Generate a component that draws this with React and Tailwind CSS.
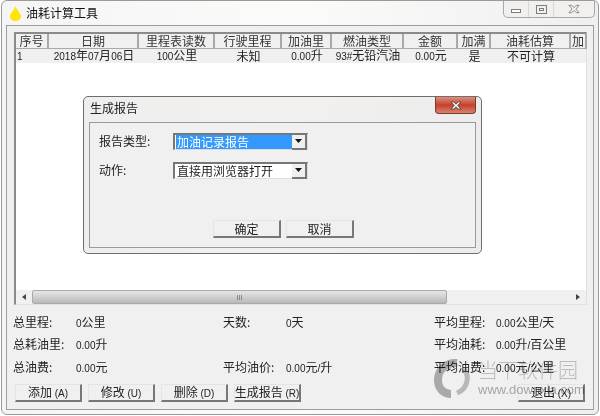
import React from "react";

const CJK = '"Noto Sans CJK SC","Liberation Sans",sans-serif';

function T({ s }) {
  const parts = s.split(/([0-9.#A-Za-z()\/]+)/);
  return (
    <span className="whitespace-pre">
      {parts.map((p, i) =>
        /^[0-9.#A-Za-z()\/]+$/.test(p) ? (
          <span key={i} className="font-['Liberation_Sans'] text-[10px]">{p}</span>
        ) : (
          <span key={i}>{p}</span>
        )
      )}
    </span>
  );
}

const cols = [
  ["序号", "1", "w-[33px]", "pl-[1px] justify-start"],
  ["日期", "2018年07月06日", "w-[90px]", ""],
  ["里程表读数", "100公里", "w-[76px]", ""],
  ["行驶里程", "未知", "w-[67px]", ""],
  ["加油里", "0.00升", "w-[50px]", ""],
  ["燃油类型", "93#无铅汽油", "w-[72px]", ""],
  ["金额", "0.00元", "w-[54px]", ""],
  ["加满", "是", "w-[33px]", ""],
  ["油耗估算", "不可计算", "w-[80px]", ""],
  ["加", "", "w-[16px]", ""],
];

function Btn({ children, w = "w-[67px]" }) {
  return (
    <div className={`${w} h-[18px] flex items-center justify-center whitespace-pre bg-[#f0f0f0] border-t border-l border-t-[#e4e4e4] border-l-[#e4e4e4] border-r-2 border-b-2 border-r-[#777] border-b-[#777] text-[12px] leading-[14px] text-[#222]`}>
      {children}
    </div>
  );
}

function Stat({ label, value, vw, lw }) {
  return (
    <div className={`flex items-center ${vw}`}>
      <span className={`${lw} shrink-0 whitespace-nowrap`}>{label}</span>
      <span className="whitespace-nowrap"><T s={value} /></span>
    </div>
  );
}

function Combo({ text, selected }) {
  return (
    <div className="w-[135px] h-[17px] flex items-center bg-white border-t-2 border-l-2 border-t-[#777] border-l-[#777] border-r border-b border-r-[#ddd] border-b-[#ddd]">
      <div className={`flex-1 h-[14px] ml-[1px] pl-[1px] flex items-center text-[12px] leading-[14px] ${selected ? "bg-[#3399ff] text-white" : "text-[#222]"}`}>{text}</div>
      <div className="w-[15px] h-[15px] flex items-center justify-center bg-[#f0f0f0] border-r-2 border-b-2 border-r-[#777] border-b-[#777]">
        <svg width="7" height="4" viewBox="0 0 7 4"><path d="M0 0h7L3.500 4z" fill="#111" /></svg>
      </div>
    </div>
  );
}

function XGlyph({ fill, stroke, w = 13, h = 10 }) {
  return (
    <svg width={w} height={h} viewBox="0 0 13 10">
      <path d="M1 1h3l2.500 2.500L9 1h3L8.500 5 12 9H9L6.500 6.500 4 9H1l3.500-4z" fill={fill} stroke={stroke} strokeWidth="1" />
    </svg>
  );
}

export default function App() {
  return (
    <div className="relative w-[600px] h-[416px] overflow-hidden bg-white" style={{ fontFamily: CJK }}>
      <div className="w-[598px] h-[415px] ml-[1px] flex flex-col rounded-[6px] border border-[#9a9a9a] bg-gradient-to-r from-[#f5f5f5] via-[#fbfbfa] to-[#efefef] text-[12px] text-[#222]">
        {/* title bar */}
        <div className="h-[24px] shrink-0 flex items-start pl-[8px] pr-[3px]">
          <svg className="mt-[5px]" width="11" height="15" viewBox="0 0 11 15">
            <path d="M5.500 0C5 3 0 7.500 0 10.500A5.500 4.500 0 0 0 11 10.500C11 7.500 6 3 5.500 0z" fill="#ffe600" />
          </svg>
          <span className="ml-[5px] mt-[3px] leading-[18px] text-[#111]">油耗计算工具</span>
          <div className="ml-auto w-[92px] h-[17px] flex rounded-b-[5px] border border-t-0 border-[#a8a8a8] bg-[#f1f0ee]">
            <div className="w-[25px] flex items-center justify-center border-r border-[#d8d8d8]">
              <div className="w-[10px] h-[4px] mt-[4px] border border-[#7d7d7d] bg-white"></div>
            </div>
            <div className="w-[25px] flex items-center justify-center border-r border-[#d8d8d8]">
              <div className="w-[11px] h-[9px] border border-[#7d7d7d] flex items-center justify-center">
                <div className="w-[5px] h-[3px] border border-[#7d7d7d]"></div>
              </div>
            </div>
            <div className="flex-1 flex items-center justify-center">
              <XGlyph fill="#f5f5f5" stroke="#808080" w={12} h={10} />
            </div>
          </div>
        </div>

        {/* client */}
        <div className="mx-[4px] h-[385px] flex flex-col border border-[#9d9d9d] bg-[#f0f0f0] px-[7px] pt-[6px]">
          {/* list */}
          <div className="w-[573px] h-[273px] flex flex-col bg-white border-t-2 border-l-2 border-t-[#8a8a8a] border-l-[#8a8a8a] border-r border-b border-r-[#e0e0e0] border-b-[#e0e0e0]">
            <div className="flex h-[15px] shrink-0 bg-[#f0f0f0]">
              {cols.map(([h, , w], i) => (
                <div key={i} className={`${w} shrink-0 flex items-center justify-center whitespace-nowrap border-r-2 border-b border-r-[#a9a9a9] border-b-[#a9a9a9] leading-[14px] text-[#333]`}>{h}</div>
              ))}
            </div>
            <div className="flex h-[14px] shrink-0 bg-[#f0f0f0]">
              {cols.map(([, v, w, extra], i) => (
                <div key={i} className={`${w} shrink-0 flex items-center justify-center whitespace-nowrap leading-[14px] text-[#222] ${extra}`}><T s={v} /></div>
              ))}
            </div>
            <div className="flex-1"></div>
            {/* scrollbar */}
            <div className="h-[14px] shrink-0 flex items-center bg-[#f0f0f0]">
              <div className="w-[16px] flex justify-center">
                <svg width="4" height="6" viewBox="0 0 4 6"><path d="M4 0v6L0 3z" fill="#444" /></svg>
              </div>
              <div className="w-[415px] h-[14px] flex items-center justify-center rounded-[2px] border border-[#a9a9a9] bg-gradient-to-b from-[#e6e6e6] via-[#d0d0d0] to-[#b8b8b8]">
                <span className="font-['Liberation_Sans'] text-[7px] leading-none text-[#666]">III</span>
              </div>
              <div className="flex-1"></div>
              <div className="w-[16px] flex justify-center">
                <svg width="4" height="6" viewBox="0 0 4 6"><path d="M0 0v6l4-3z" fill="#444" /></svg>
              </div>
            </div>
          </div>

          {/* stats */}
          <div className="mt-[6px] -ml-[1px] flex flex-col">
            <div className="h-[22px] flex">
              <Stat label="总里程:" value="0公里" vw="w-[210px]" lw="w-[63px]" />
              <Stat label="天数:" value="0天" vw="w-[211px]" lw="w-[63px]" />
              <Stat label="平均里程:" value="0.00公里/天" vw="" lw="w-[62px]" />
            </div>
            <div className="h-[22px] flex">
              <Stat label="总耗油里:" value="0.00升" vw="w-[421px]" lw="w-[63px]" />
              <Stat label="平均油耗:" value="0.00升/百公里" vw="" lw="w-[62px]" />
            </div>
            <div className="h-[23px] flex">
              <Stat label="总油费:" value="0.00元" vw="w-[210px]" lw="w-[63px]" />
              <Stat label="平均油价:" value="0.00元/升" vw="w-[211px]" lw="w-[63px]" />
              <Stat label="平均油费:" value="0.00元/公里" vw="" lw="w-[62px]" />
            </div>
          </div>

          {/* buttons */}
          <div className="mt-[6px] flex pl-[1px] pr-[1px]">
            <div className="flex gap-[6px]">
              <Btn><T s="添加 (A)" /></Btn>
              <Btn><T s="修改 (U)" /></Btn>
              <Btn><T s="删除 (D)" /></Btn>
              <Btn><T s="生成报告 (R)" /></Btn>
            </div>
            <div className="ml-auto"><Btn><T s="退出 (X)" /></Btn></div>
          </div>
        </div>
      </div>

      {/* dialog */}
      <div className="absolute left-[83px] top-[96px] w-[399px] h-[158px] flex flex-col rounded-[5px] border border-[#6e6e6e] bg-gradient-to-r from-[#eeeeee] via-[#f3f1ef] to-[#ececec] text-[12px] text-[#222]">
        <div className="h-[25px] shrink-0 flex items-start pl-[6px] pr-[5px]">
          <span className="mt-[2px] leading-[18px] text-[#222]">生成报告</span>
          <div className="ml-auto w-[41px] h-[17px] flex items-center justify-center rounded-b-[4px] border border-t-0 border-[#7a3a30] bg-gradient-to-b from-[#dc8d7e] via-[#c4402c] to-[#d9806f]">
            <XGlyph fill="#f2f2f2" stroke="#5a4a48" w={12} h={9} />
          </div>
        </div>
        <div className="mx-[5px] h-[126px] flex flex-col border border-[#9a9a9a] bg-[#f0f0f0] pl-[9px]">
          <div className="mt-[10px] h-[17px] flex items-center">
            <span className="w-[74px] leading-[14px] -mt-[1px]">报告类型:</span>
            <Combo text="加油记录报告" selected />
          </div>
          <div className="mt-[12px] h-[17px] flex items-center">
            <span className="w-[74px] leading-[14px] -mt-[1px]">动作:</span>
            <Combo text="直接用浏览器打开" />
          </div>
          <div className="mt-[41px] flex gap-[5px] pl-[114px]">
            <Btn w="w-[68px]">确定</Btn>
            <Btn w="w-[68px]">取消</Btn>
          </div>
        </div>
      </div>

      {/* watermark */}
      <div className="absolute left-[433px] top-[358px] flex pointer-events-none mix-blend-multiply">
        <svg width="40" height="40" viewBox="0 0 40 40">
          <path d="M24 5C13 4 5 12 5 22c0 9 6 14 13 14" fill="none" stroke="#b4b4b4" strokeWidth="8" />
          <path d="M31 11c3 4 4 8 3 12-1 6-5 10-10 12" fill="none" stroke="#c4c4c4" strokeWidth="5" />
        </svg>
        <div className="ml-[5px] flex flex-col">
          <span className="text-[20px] leading-[24px] font-light text-[#c8c8c8] whitespace-nowrap">当下软件园</span>
          <span className="font-['Liberation_Sans'] text-[13px] leading-[14px] mt-[1px] text-[#b0b0b0] whitespace-nowrap">www.downxia.com</span>
        </div>
      </div>
    </div>
  );
}
